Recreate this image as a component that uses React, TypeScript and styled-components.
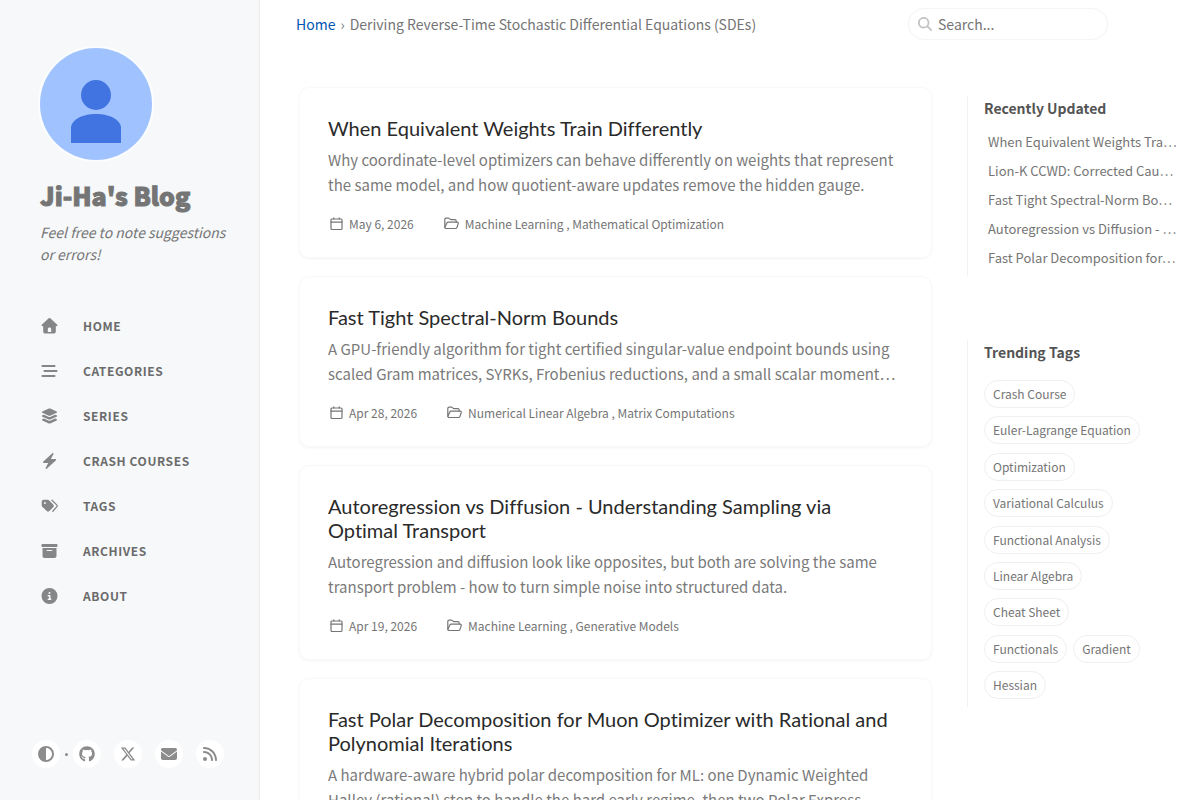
import React from "react";
import styled, { createGlobalStyle } from "styled-components";
import {
  FaBarsStaggered,
  FaLayerGroup,
  FaBoxArchive,
  FaCircleInfo,
  FaCircleHalfStroke,
  FaGithub,
  FaXTwitter,
  FaEnvelope,
  FaRss,
  FaMagnifyingGlass,
} from "react-icons/fa6";

const GlobalStyle = createGlobalStyle`
  * { box-sizing: border-box; }
  body {
    margin: 0;
    background: #fff;
    color: #757575;
    font-family: "Noto Sans CJK KR", "Noto Sans", sans-serif;
    font-size: 14px;
    line-height: 25px;
  }
  a { color: inherit; text-decoration: none; }
  ul { list-style: none; margin: 0; padding: 0; }
  h1, h2, p { margin: 0; }
`;

const Page = styled.div`
  display: grid;
  grid-template-columns: 260px minmax(0, 1fr);
  align-items: start;
`;

const Sidebar = styled.aside`
  position: sticky;
  top: 0;
  height: 100vh;
  display: flex;
  flex-direction: column;
  background: #f6f8fa;
  border-right: 1px solid #ececec;
`;

const Profile = styled.header`
  padding: 46px 24px 0 38px;
`;

const Avatar = styled.a`
  display: block;
  width: 116px;
  height: 116px;
  border: 2px solid #fbfdff;
  border-radius: 50%;
  overflow: hidden;
  svg { display: block; }
`;

const SiteTitle = styled.h1`
  padding-left: 2px;
  margin-top: 16px;
  color: #757575;
  font-size: 25px;
  font-weight: 900;
  line-height: 34px;
  -webkit-text-stroke: 1px #757575;
`;

const Tagline = styled.p`
  padding-left: 2px;
  margin-top: 9px;
  font-size: 14px;
  font-style: italic;
  line-height: 22px;
`;

const Nav = styled.nav`
  flex: 1;
  margin-top: 38px;
  padding-left: 41px;
`;

const NavLink = styled.a`
  display: flex;
  align-items: center;
  gap: 25px;
  height: 45px;
  color: #6b6b6b;
  font-size: 12px;
  font-weight: 700;
  letter-spacing: 0.05em;
  text-transform: uppercase;
  svg { width: 17px; height: 16px; color: #858688; }
`;

const Contacts = styled.div`
  display: flex;
  align-items: center;
  padding: 0 32px 32px;
`;

const RoundButton = styled.button`
  display: grid;
  place-items: center;
  width: 28px;
  height: 28px;
  padding: 0;
  border: 0;
  border-radius: 50%;
  background: #fff;
  color: #8c8c8c;
`;

const ContactLinks = styled.div`
  display: flex;
  gap: 13px;
`;

const Dot = styled.span`
  width: 3px;
  height: 3px;
  margin: 0 5px;
  border-radius: 50%;
  background: #8c8c8c;
`;

const Main = styled.div`
  padding: 0 24px 0 36px;
`;

const Topbar = styled.header`
  display: flex;
  align-items: center;
  justify-content: space-between;
  height: 48px;
  padding-right: 68px;
`;

const Breadcrumb = styled.nav`
  display: flex;
  gap: 5px;
  a { color: #0056b2; }
`;

const SearchBox = styled.label`
  display: flex;
  align-items: center;
  gap: 6px;
  width: 200px;
  height: 32px;
  padding: 0 9px;
  border: 1px solid #f4f4f4;
  border-radius: 16px;
  svg { flex: none; color: #c2c2c2; }
`;

const SearchInput = styled.input`
  width: 100%;
  padding: 0;
  border: 0;
  outline: 0;
  background: transparent;
  font: inherit;
  color: #757575;
  &::placeholder { color: #757575; opacity: 1; }
`;

const Columns = styled.div`
  display: grid;
  grid-template-columns: minmax(0, 1fr) 209px;
  gap: 35px;
  align-items: start;
`;

const Posts = styled.main`
  display: flex;
  flex-direction: column;
  gap: 18px;
  padding: 39px 0 39px 3px;
`;

const Card = styled.article`
  padding: 28px 28px 22px;
  border: 1px solid #f9f9f9;
  border-radius: 10px;
  box-shadow: 0 1px 3px rgba(0, 0, 0, 0.05);
`;

const PostTitle = styled.h1`
  color: #2a2a2a;
  font-family: Lato, sans-serif;
  font-size: 20px;
  font-weight: 400;
  font-variant-ligatures: none;
  line-height: 24px;
`;

const Excerpt = styled.p`
  margin-top: 7px;
  color: #7a7a7a;
  font-size: 15px;
`;

const Meta = styled.div`
  display: flex;
  gap: 30px;
  margin-top: 15px;
  padding-left: 2px;
  font-size: 12px;
  line-height: 23px;
`;

const MetaItem = styled.span`
  display: flex;
  align-items: center;
  gap: 6px;
  svg { flex: none; }
`;

const Panel = styled.aside`
  padding-top: 48px;
`;

const PanelSection = styled.section`
  padding-left: 16px;
  border-left: 1px solid #f2f2f2;
  & + & { margin-top: 64px; }
`;

const PanelTitle = styled.h2`
  color: #545454;
  font-size: 14px;
  font-weight: 700;
  line-height: 24px;
`;

const Recent = styled.ul`
  padding: 7px 0 4px 4px;
  font-size: 13px;
  line-height: 29px;
  white-space: nowrap;
`;

const Tags = styled.div`
  display: flex;
  flex-wrap: wrap;
  align-content: space-between;
  column-gap: 6px;
  min-height: 319px;
  margin: 16px 24px 0 0;
`;

const Tag = styled.a`
  height: 28px;
  padding: 0 8px;
  border: 1px solid #efefef;
  border-radius: 14px;
  font-size: 12px;
  line-height: 25px;
`;

const TagsSection = styled(PanelSection)`
  padding-bottom: 8px;
`;

const HomeIcon = () => (
  <svg viewBox="0 0 17 16" fill="currentColor">
    <path
      fillRule="evenodd"
      d="M7.7.3a1.1 1.1 0 0 1 1.6 0l6.7 6.1c.9.8.3 1.8-.5 1.8h-.7v5c0 1.5-.8 2.3-2.200 2.300H4.400c-1.400 0-2.200-.8-2.200-2.300v-5h-.7c-.8 0-1.400-1-.5-1.800zM8.500 9.500c-1.100 0-1.700.6-1.700 1.700V14h3.400v-2.800c0-1.100-.6-1.700-1.700-1.700z"
    />
  </svg>
);

const BoltIcon = () => (
  <svg viewBox="0 0 17 16" fill="currentColor">
    <path d="M11.4.2c.7-.5 1.4.1 1.1.8L9.9 6.1h4.4c.8 0 1.1.9.5 1.4L5.7 15.8c-.7.6-1.4 0-1.1-.8l2.6-5.1H2.8c-.8 0-1.1-.9-.5-1.4z" />
  </svg>
);

const TagsIcon = () => (
  <svg viewBox="0 0 17 16" fill="currentColor">
    <path
      fillRule="evenodd"
      d="M.7 3.6c0-1.1.8-1.9 1.9-1.9h4c.5 0 1 .2 1.4.6l4.2 4.3c.8.8.8 1.9 0 2.7L8.4 13c-.8.8-1.9.8-2.7 0L1.3 8.7C.9 8.300.7 7.900.7 7.400zM3.900 3.900a1 1 0 1 0 0 2 1 1 0 0 0 0-2z"
    />
    <path
      d="M11 2.200l4.700 4.700c.6.600.6 1.400 0 2L11.800 13.200"
      fill="none"
      stroke="currentColor"
      strokeWidth="1.300"
      strokeLinecap="round"
    />
  </svg>
);

const CalendarIcon = () => (
  <svg width="13" height="14" viewBox="0 0 13 14" fill="none" stroke="currentColor" strokeWidth="1.200" strokeLinecap="round">
    <rect x="1" y="2" width="11" height="10.500" rx="1" />
    <path d="M1 5.200h11M3.800.8v1.200M9.200.8v1.200" />
  </svg>
);

const FolderOpenIcon = () => (
  <svg width="15" height="14" viewBox="0 0 15 14" fill="none" stroke="currentColor" strokeWidth="1.200" strokeLinecap="round" strokeLinejoin="round">
    <path d="M.8 10.200V2.600C.8 1.800 1.300 1.200 2.100 1.200h2.300c.4 0 .7.100 1 .4l.8.700c.2.200.5.300.8.300h3.900c.8 0 1.300.5 1.300 1.300v.9" />
    <path d="M4.300 5.200h8.900c.8 0 1.300.7 1 1.400l-1.300 4c-.2.600-.7.900-1.300.900H2.200c-.9 0-1.500-.7-1.200-1.500l1.700-3.800c.3-.6.900-1 1.600-1z" />
  </svg>
);

const AvatarArt = () => (
  <svg width="112" height="112" viewBox="0 0 112 112" role="img" aria-label="avatar">
    <rect width="112" height="112" fill="#a0c3ff" />
    <circle cx="56" cy="47" r="15" fill="#4174e0" />
    <path d="M31 95V80c0-8 11-14 25-14s25 6 25 14v15z" fill="#4174e0" />
  </svg>
);

const navItems = [
  { label: "Home", icon: <HomeIcon /> },
  { label: "Categories", icon: <FaBarsStaggered /> },
  { label: "Series", icon: <FaLayerGroup /> },
  { label: "Crash Courses", icon: <BoltIcon /> },
  { label: "Tags", icon: <TagsIcon /> },
  { label: "Archives", icon: <FaBoxArchive /> },
  { label: "About", icon: <FaCircleInfo /> },
];

const contacts = [
  { label: "GitHub", icon: <FaGithub size={16} /> },
  { label: "X", icon: <FaXTwitter size={16} /> },
  { label: "Email", icon: <FaEnvelope size={16} /> },
  { label: "RSS", icon: <FaRss size={16} /> },
];

const posts = [
  {
    title: "When Equivalent Weights Train Differently",
    excerpt:
      "Why coordinate-level optimizers can behave differently on weights that represent the same model, and how quotient-aware updates remove the hidden gauge.",
    date: "May 6, 2026",
    categories: "Machine Learning , Mathematical Optimization",
  },
  {
    title: "Fast Tight Spectral-Norm Bounds",
    excerpt:
      "A GPU-friendly algorithm for tight certified singular-value endpoint bounds using scaled Gram matrices, SYRKs, Frobenius reductions, and a small scalar moment…",
    date: "Apr 28, 2026",
    categories: "Numerical Linear Algebra , Matrix Computations",
  },
  {
    title: "Autoregression vs Diffusion - Understanding Sampling via Optimal Transport",
    excerpt:
      "Autoregression and diffusion look like opposites, but both are solving the same transport problem - how to turn simple noise into structured data.",
    date: "Apr 19, 2026",
    categories: "Machine Learning , Generative Models",
  },
  {
    title: "Fast Polar Decomposition for Muon Optimizer with Rational and Polynomial Iterations",
    excerpt:
      "A hardware-aware hybrid polar decomposition for ML: one Dynamic Weighted Halley (rational) step to handle the hard early regime, then two Polar Express…",
    date: "Apr 12, 2026",
    categories: "Numerical Linear Algebra , Machine Learning",
  },
];

const recent = [
  "When Equivalent Weights Tra…",
  "Lion-K CCWD: Corrected Cau…",
  "Fast Tight Spectral-Norm Bo…",
  "Autoregression vs Diffusion - …",
  "Fast Polar Decomposition for…",
];

const tags = [
  "Crash Course",
  "Euler-Lagrange Equation",
  "Optimization",
  "Variational Calculus",
  "Functional Analysis",
  "Linear Algebra",
  "Cheat Sheet",
  "Functionals",
  "Gradient",
  "Hessian",
];

export default function App() {
  return (
    <>
      <GlobalStyle />
      <Page>
        <Sidebar>
          <Profile>
            <Avatar href="#">
              <AvatarArt />
            </Avatar>
            <SiteTitle>
              <a href="#">Ji-Ha's Blog</a>
            </SiteTitle>
            <Tagline>Feel free to note suggestions or errors!</Tagline>
          </Profile>
          <Nav>
            <ul>
              {navItems.map((n) => (
                <li key={n.label}>
                  <NavLink href="#">
                    {n.icon}
                    {n.label}
                  </NavLink>
                </li>
              ))}
            </ul>
          </Nav>
          <Contacts>
            <RoundButton type="button" aria-label="Switch theme">
              <FaCircleHalfStroke size={16} />
            </RoundButton>
            <Dot />
            <ContactLinks>
              {contacts.map((c) => (
                <RoundButton as="a" href="#" key={c.label} aria-label={c.label}>
                  {c.icon}
                </RoundButton>
              ))}
            </ContactLinks>
          </Contacts>
        </Sidebar>
        <Main>
          <Topbar>
            <Breadcrumb aria-label="Breadcrumb">
              <a href="#">Home</a>
              <span>›</span>
              <span>Deriving Reverse-Time Stochastic Differential Equations (SDEs)</span>
            </Breadcrumb>
            <SearchBox>
              <FaMagnifyingGlass size={14} />
              <SearchInput type="search" aria-label="Search" placeholder="Search..." />
            </SearchBox>
          </Topbar>
          <Columns>
            <Posts>
              {posts.map((p) => (
                <Card key={p.title}>
                  <PostTitle>
                    <a href="#">{p.title}</a>
                  </PostTitle>
                  <Excerpt>{p.excerpt}</Excerpt>
                  <Meta>
                    <MetaItem>
                      <CalendarIcon />
                      <time>{p.date}</time>
                    </MetaItem>
                    <MetaItem>
                      <FolderOpenIcon />
                      {p.categories}
                    </MetaItem>
                  </Meta>
                </Card>
              ))}
            </Posts>
            <Panel>
              <PanelSection>
                <PanelTitle>Recently Updated</PanelTitle>
                <Recent>
                  {recent.map((r) => (
                    <li key={r}>
                      <a href="#">{r}</a>
                    </li>
                  ))}
                </Recent>
              </PanelSection>
              <TagsSection>
                <PanelTitle>Trending Tags</PanelTitle>
                <Tags>
                  {tags.map((t) => (
                    <Tag href="#" key={t}>
                      {t}
                    </Tag>
                  ))}
                </Tags>
              </TagsSection>
            </Panel>
          </Columns>
        </Main>
      </Page>
    </>
  );
}
